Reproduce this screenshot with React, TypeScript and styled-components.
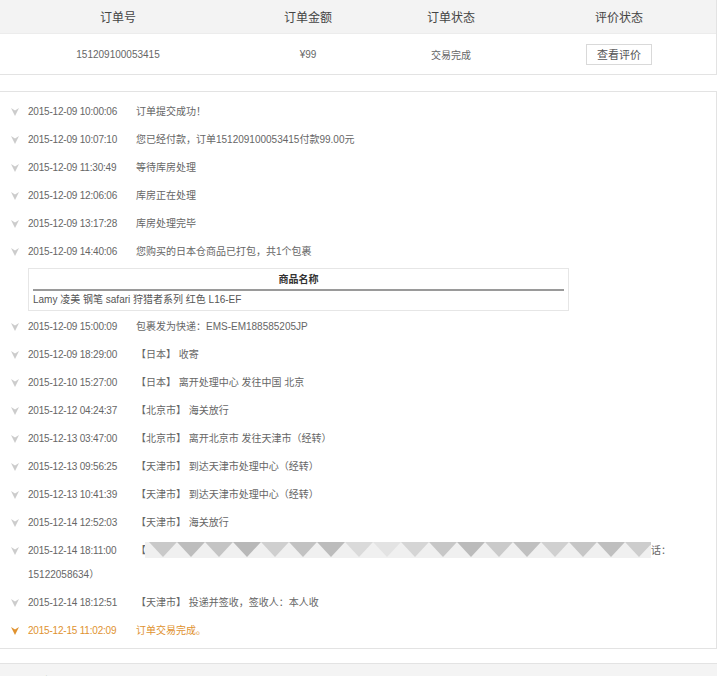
import React from "react";
import styled, { createGlobalStyle } from "styled-components";

const GlobalStyle = createGlobalStyle`
  html, body {
    margin: 0;
    padding: 0;
    background: #fff;
  }
  body {
    font-family: "Liberation Sans", "Noto Sans CJK SC", sans-serif;
    font-size: 10px;
    color: #666;
  }
`;

const Page = styled.div`
  width: 717px;
  height: 676px;
  overflow: hidden;
`;

const OrderTable = styled.div`
  border-right: 1px solid #e3e3e3;
  border-bottom: 1px solid #e3e3e3;
`;

const OrderRow = styled.div<{ $head?: boolean }>`
  display: grid;
  grid-template-columns: 236px 144px 142px 1fr;
  align-items: center;
  height: ${(p) => (p.$head ? "33px" : "40px")};
  background: ${(p) => (p.$head ? "#f3f3f3" : "#fff")};
  font-size: ${(p) => (p.$head ? "12px" : "10px")};
  color: ${(p) => (p.$head ? "#444" : "#666")};
  border-bottom: ${(p) => (p.$head ? "1px solid #ececec" : "none")};
`;

const Cell = styled.div`
  text-align: center;
`;

const ViewButton = styled.button`
  font-family: inherit;
  font-size: 11px;
  color: #555;
  background: #fff;
  border: 1px solid #d9d9d9;
  height: 21px;
  width: 66px;
  padding: 0;
  cursor: pointer;
`;

const LogPanel = styled.div`
  margin-top: 16px;
  border-top: 1px solid #e3e3e3;
  border-right: 1px solid #e3e3e3;
  border-bottom: 1px solid #e3e3e3;
  padding: 6px 0 3px;
`;

const LogRow = styled.div<{ $active?: boolean }>`
  position: relative;
  padding: 2px 40px 2px 28px;
  line-height: 24px;
  color: ${(p) => (p.$active ? "#e0922f" : "#666")};
`;

const Arrow = styled.svg`
  position: absolute;
  left: 11px;
  top: 10px;
`;

const Time = styled.span`
  display: inline-block;
  width: 108px;
  white-space: nowrap;
  letter-spacing: -0.2px;
`;

const ProductTable = styled.div`
  margin: 2px 0 2px 28px;
  width: 531px;
  border: 1px solid #e6e6e6;
  padding: 0 4px;
`;

const ProductHead = styled.div`
  height: 20px;
  line-height: 21px;
  text-align: center;
  font-weight: bold;
  color: #333;
  border-bottom: 2px solid #9a9a9a;
`;

const ProductCell = styled.div`
  height: 19px;
  line-height: 18px;
  color: #555;
`;

const Redaction = styled.svg`
  display: inline-block;
  vertical-align: -4px;
  margin-left: -1px;
`;

const Section = styled.div`
  margin-top: 14px;
  background: #f4f4f4;
  border-top: 1px solid #e3e3e3;
  height: 30px;
  padding: 9px 8px 0;
  font-size: 11px;
  color: #333;
`;

const DownArrow = ({ color }: { color: string }) => (
  <Arrow width="8" height="8" viewBox="0 0 8 8">
    <path d="M0 0 L4 2.6 L8 0 L4 8 Z" fill={color} />
  </Arrow>
);

const shades = [
  "#c9c9c9", "#bdbdbd", "#c4c4c4", "#b8b8b8", "#cfcfcf", "#c2c2c2", "#bcbcbc",
  "#dadada", "#e3e3e3", "#d5d5d5", "#c7c7c7", "#bbbbbb", "#cacaca", "#c0c0c0",
  "#d0d0d0", "#c6c6c6", "#bfbfbf", "#cdcdcd",
];

const RedactBar = () => (
  <Redaction width="506" height="16" viewBox="0 0 506 16">
    <rect x="0" y="0" width="506" height="16" fill="#f0f0f0" />
    {shades.map((c, i) => (
      <path
        key={i}
        d={`M${i * 28 + 4} 0 L${i * 28 + 32} 0 L${i * 28 + 18} 15 Z`}
        fill={c}
      />
    ))}
  </Redaction>
);

type Log = { time: string; msg: React.ReactNode; product?: string };

const logs: Log[] = [
  { time: "2015-12-09 10:00:06", msg: "订单提交成功！" },
  { time: "2015-12-09 10:07:10", msg: "您已经付款，订单151209100053415付款99.00元" },
  { time: "2015-12-09 11:30:49", msg: "等待库房处理" },
  { time: "2015-12-09 12:06:06", msg: "库房正在处理" },
  { time: "2015-12-09 13:17:28", msg: "库房处理完毕" },
  {
    time: "2015-12-09 14:40:06",
    msg: "您购买的日本仓商品已打包，共1个包裹",
    product: "Lamy 凌美 钢笔 safari 狩猎者系列 红色 L16-EF",
  },
  { time: "2015-12-09 15:00:09", msg: "包裹发为快递：EMS-EM188585205JP" },
  { time: "2015-12-09 18:29:00", msg: "【日本】 收寄" },
  { time: "2015-12-10 15:27:00", msg: "【日本】 离开处理中心 发往中国 北京" },
  { time: "2015-12-12 04:24:37", msg: "【北京市】 海关放行" },
  { time: "2015-12-13 03:47:00", msg: "【北京市】 离开北京市 发往天津市（经转）" },
  { time: "2015-12-13 09:56:25", msg: "【天津市】 到达天津市处理中心（经转）" },
  { time: "2015-12-13 10:41:39", msg: "【天津市】 到达天津市处理中心（经转）" },
  { time: "2015-12-14 12:52:03", msg: "【天津市】 海关放行" },
  {
    time: "2015-12-14 18:11:00",
    msg: (
      <>
        【<RedactBar />话： 15122058634）
      </>
    ),
  },
  { time: "2015-12-14 18:12:51", msg: "【天津市】 投递并签收，签收人：本人收" },
];

export default function App() {
  return (
    <Page>
      <GlobalStyle />
      <OrderTable>
        <OrderRow $head>
          <Cell>订单号</Cell>
          <Cell>订单金额</Cell>
          <Cell>订单状态</Cell>
          <Cell>评价状态</Cell>
        </OrderRow>
        <OrderRow>
          <Cell>151209100053415</Cell>
          <Cell>¥99</Cell>
          <Cell>交易完成</Cell>
          <Cell>
            <ViewButton>查看评价</ViewButton>
          </Cell>
        </OrderRow>
      </OrderTable>

      <LogPanel>
        {logs.map((l) => (
          <React.Fragment key={l.time}>
            <LogRow>
              <DownArrow color="#cccccc" />
              <Time>{l.time}</Time>
              {l.msg}
            </LogRow>
            {l.product && (
              <ProductTable>
                <ProductHead>商品名称</ProductHead>
                <ProductCell>{l.product}</ProductCell>
              </ProductTable>
            )}
          </React.Fragment>
        ))}
        <LogRow $active>
          <DownArrow color="#e0922f" />
          <Time>2015-12-15 11:02:09</Time>
          订单交易完成。
        </LogRow>
      </LogPanel>

      <Section>收货信息</Section>
    </Page>
  );
}
